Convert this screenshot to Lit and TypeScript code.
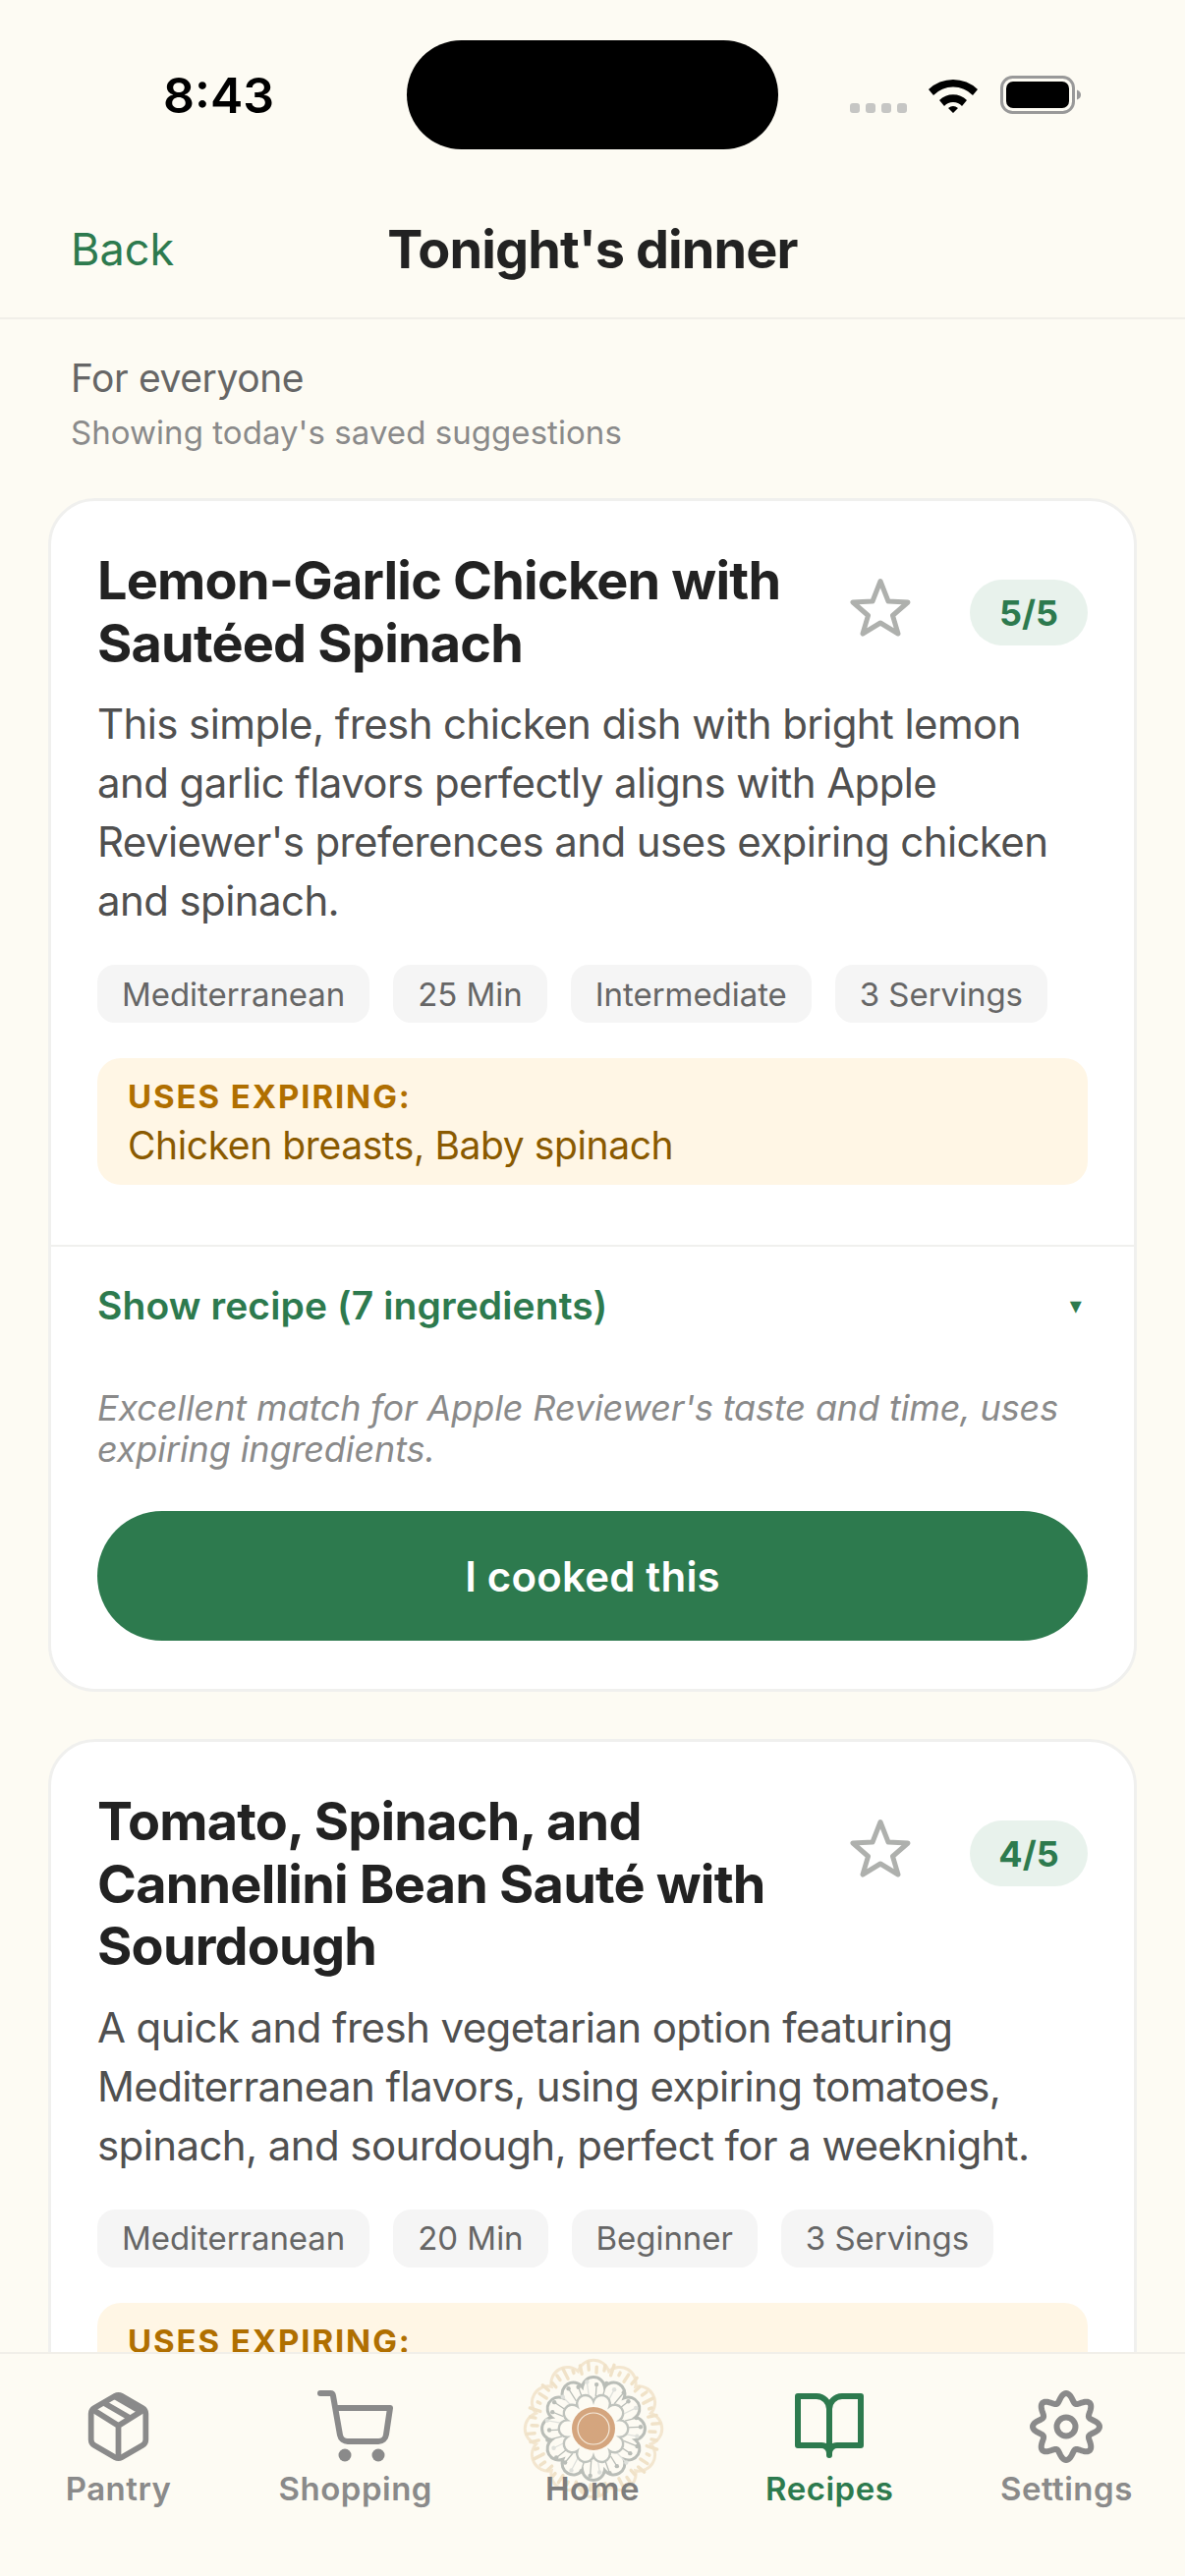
import { LitElement, html, css, svg } from "lit";
import { customElement } from "lit/decorators.js";

const polar = (r: number, deg: number, c = 105) => {
  const a = ((deg - 90) * Math.PI) / 180;
  return [c + r * Math.cos(a), c + r * Math.sin(a)].map((v) => v.toFixed(2));
};
const scallop = (n: number, valley: number, arc: number, offset = 0) => {
  let d = "";
  for (let i = 0; i < n; i++) {
    const p0 = polar(valley, offset + (i * 360) / n);
    const p1 = polar(valley, offset + ((i + 1) * 360) / n);
    d += `${i === 0 ? `M${p0[0]} ${p0[1]}` : ""}A${arc} ${arc} 0 0 1 ${p1[0]} ${p1[1]}`;
  }
  return d + "Z";
};
const range = (n: number) => Array.from({ length: n }, (_, i) => i);

const mandala = html`<svg class="mandala" viewBox="0 0 210 210" width="210" height="210" aria-hidden="true">
  <path d=${scallop(12, 60.5, 16.5, 15)} fill="none" stroke="#f3e6cf" stroke-width="3"></path>
  ${range(48).map((i) => {
    const deg = i * 7.5 + 3;
    const [x1, y1] = polar(57 + (i % 2) * 3, deg);
    const [x2, y2] = polar(63 + (i % 3) * 2.5, deg);
    return svg`<line x1=${x1} y1=${y1} x2=${x2} y2=${y2} stroke="#f0e2c8" stroke-width="3.4" stroke-linecap="round"></line>`;
  })}
  <path d=${scallop(12, 44, 11.5, 15)} fill="#fdfbf3" stroke="#b9bdb7" stroke-width="3"></path>
  ${range(30).map((i) => {
    const deg = i * 12 + 4;
    const [x1, y1] = polar(33, deg);
    const [x2, y2] = polar(44 + (i % 2) * 3, deg);
    const [cx, cy] = polar(45 + (i % 2) * 3, deg);
    const tone = i % 3 === 2 ? "#dfe1dc" : "#b9bdb7";
    return svg`<line x1=${x1} y1=${y1} x2=${x2} y2=${y2} stroke=${tone} stroke-width="1.3"></line><circle cx=${cx} cy=${cy} r="2.2" fill=${tone}></circle>`;
  })}
  <path d=${scallop(10, 28, 8.5)} fill="#fdfbf3" stroke="#bfc3bd" stroke-width="2.4"></path>
  <circle cx="105" cy="105" r="22" fill="#d4a57e"></circle>
  <circle cx="105" cy="105" r="16" fill="none" stroke="#f6ebdc" stroke-width="1.2"></circle>
</svg>`;

const gearPoints = range(240)
  .map((i) => {
    const deg = i * 1.5;
    const r = 29.5 + 4.5 * Math.cos((8 * deg * Math.PI) / 180);
    return polar(r, deg, 40).join(",");
  })
  .join(" ");

const icons = {
  pantry: html`<svg viewBox="0 0 74 74" width="71" height="72" fill="none" stroke="currentColor" stroke-width="6" stroke-linecap="round" stroke-linejoin="round"><path d="M33.500 4.500a7 7 0 0 1 7 0l22 12.600a7 7 0 0 1 3.500 6v27.800a7 7 0 0 1-3.500 6l-22 12.600a7 7 0 0 1-7 0l-22-12.600a7 7 0 0 1-3.500-6V23.100a7 7 0 0 1 3.500-6Z"></path><path d="M10 19l27 17 27-17M37 36v34M21 11.500l27 15.500M33 5l27 15.500" stroke-linecap="butt"></path></svg>`,
  shopping: html`<svg viewBox="0 0 78 74" width="78" height="74" fill="none" stroke="currentColor" stroke-width="6" stroke-linecap="round" stroke-linejoin="round"><path d="M3 3h10a3 3 0 0 1 3 2.500l7 40a8 8 0 0 0 8 6.500h31a8 8 0 0 0 8-7l4-27H19"></path><circle cx="28" cy="66" r="6.500" fill="currentColor" stroke="none"></circle><circle cx="62" cy="66" r="6.500" fill="currentColor" stroke="none"></circle></svg>`,
  book: html`<svg viewBox="0 0 74 74" width="74" height="74" fill="none" stroke="currentColor" stroke-width="6" stroke-linecap="round" stroke-linejoin="round"><path d="M37 66V19a13 13 0 0 0-13-13H5v50h24a8 8 0 0 1 8 8 8 8 0 0 1 8-8h24V6H50a13 13 0 0 0-13 13"></path></svg>`,
  gear: html`<svg viewBox="0 0 80 80" width="80" height="80" fill="none" stroke="currentColor" stroke-width="6" stroke-linejoin="round"><polygon points=${gearPoints}></polygon><circle cx="40" cy="40" r="9.500"></circle></svg>`,
};

const star = html`<svg class="star" viewBox="0 0 62 60" width="62" height="60" fill="none" stroke="#aeb0ad" stroke-width="5" stroke-linejoin="round" stroke-linecap="round"><path d="M31 3.500l8 20.500 20 1-15.500 13.500L49 57 31 46 13 57l5.500-18.500L3 25l20-1Z"></path></svg>`;

interface Recipe {
  title: string[];
  rating: string;
  desc: string;
  tags: string[];
  expiring?: string;
  ingredients?: number;
  note?: string;
}

const recipes: Recipe[] = [
  {
    title: ["Lemon-Garlic Chicken with", "Sautéed Spinach"],
    rating: "5/5",
    desc: "This simple, fresh chicken dish with bright lemon and garlic flavors perfectly aligns with Apple Reviewer's preferences and uses expiring chicken and spinach.",
    tags: ["Mediterranean", "25 Min", "Intermediate", "3 Servings"],
    expiring: "Chicken breasts, Baby spinach",
    ingredients: 7,
    note: "Excellent match for Apple Reviewer's taste and time, uses expiring ingredients.",
  },
  {
    title: ["Tomato, Spinach, and", "Cannellini Bean Sauté with", "Sourdough"],
    rating: "4/5",
    desc: "A quick and fresh vegetarian option featuring Mediterranean flavors, using expiring tomatoes, spinach, and sourdough, perfect for a weeknight.",
    tags: ["Mediterranean", "20 Min", "Beginner", "3 Servings"],
  },
];

@customElement("app-root")
export class AppRoot extends LitElement {
  static styles = css`
    :host {
      display: flex;
      flex-direction: column;
      width: 1206px;
      height: 2622px;
      overflow: hidden;
      background: #fdfbf3;
      font-family: Inter, "Liberation Sans", sans-serif;
      color: #222;
    }
    .status {
      flex: none;
      height: 192px;
      display: grid;
      grid-template-columns: 1fr 378px 1fr;
      box-sizing: border-box;
      padding-top: 41px;
    }
    .time {
      font-size: 50px;
      font-weight: 600;
      color: #000;
      padding-left: 166px;
      line-height: 112px;
    }
    .pill {
      height: 111px;
      background: #000;
      border-radius: 56px;
    }
    .sys {
      display: flex;
      justify-content: flex-end;
      padding-right: 106px;
      height: 78px;
      margin-top: 36px;
      align-items: flex-start;
    }
    .header {
      flex: none;
      height: 133px;
      display: grid;
      grid-template-columns: 1fr auto 1fr;
      align-items: center;
      padding: 0 72px 8px;
      box-sizing: border-box;
      border-bottom: 2px solid #f1efe9;
    }
    .back {
      font-size: 45px;
      color: #2d7a4e;
    }
    .page-title {
      font-size: 54px;
      font-weight: 700;
      letter-spacing: -0.9px;
      color: #222;
    }
    .main {
      flex: 1;
      min-height: 0;
      overflow: hidden;
    }
    .intro {
      padding: 36px 72px 0;
    }
    .who {
      font-size: 39px;
      line-height: 48px;
      letter-spacing: -0.4px;
      color: #666;
    }
    .saved {
      font-size: 33px;
      line-height: 40px;
      margin-top: 11px;
      color: #8a8a8a;
      letter-spacing: 0.05px;
    }
    .cards {
      display: flex;
      flex-direction: column;
      gap: 48px;
      padding: 47px 49px 0 49px;
    }
    .card {
      background: #fff;
      border: 3px solid #f0f0ee;
      border-radius: 48px;
    }
    .body {
      padding: 49px 47px 61px 47px;
    }
    .top {
      display: flex;
      align-items: flex-start;
    }
    .title {
      flex: 1;
      margin: 0;
      font-size: 54px;
      line-height: 63.6px;
      font-weight: 700;
      letter-spacing: -0.8px;
      color: #222;
    }
    .title span {
      display: block;
      white-space: nowrap;
    }
    .star {
      flex: none;
      margin: 29px 60px 0 0;
    }
    .badge {
      flex: none;
      width: 120px;
      height: 67px;
      margin-top: 31px;
      border-radius: 34px;
      background: #e8f2ec;
      color: #2d7a4e;
      font-size: 36px;
      font-weight: 700;
      display: flex;
      align-items: center;
      justify-content: center;
    }
    .desc {
      margin: 21px 0 0;
      font-size: 42px;
      line-height: 60px;
      letter-spacing: -0.6px;
      color: #505050;
    }
    .tags {
      display: flex;
      gap: 24px;
      margin-top: 35px;
    }
    .tag {
      height: 59px;
      display: flex;
      align-items: center;
      padding: 0 25px;
      font-size: 33px;
      letter-spacing: -0.05px;
      white-space: nowrap;
      border-radius: 18px;
      background: #f5f5f5;
      color: #666;
    }
    .expiring {
      margin-top: 36px;
      height: 129px;
      box-sizing: border-box;
      padding: 19px 31px 0 31px;
      background: #fff6e5;
      border-radius: 24px;
    }
    .exp-label {
      font-size: 33px;
      line-height: 40px;
      font-weight: 700;
      letter-spacing: 1.9px;
      color: #b06f00;
    }
    .exp-value {
      font-size: 39px;
      line-height: 50px;
      margin-top: 5px;
      letter-spacing: -0.4px;
      color: #8a5a00;
    }
    .toggle {
      height: 121px;
      box-sizing: border-box;
      border-top: 2px solid #f0f0ee;
      padding: 0 53px 0 47px;
      display: flex;
      align-items: center;
      justify-content: space-between;
      font-size: 39px;
      font-weight: 600;
      letter-spacing: 0.1px;
      color: #2d7a4e;
    }
    .caret {
      font-family: "DejaVu Sans", sans-serif;
      font-size: 24px;
      font-weight: 400;
    }
    .foot {
      padding: 24px 47px 49px 47px;
    }
    .note {
      margin: 0;
      font-size: 36px;
      line-height: 42px;
      font-style: italic;
      letter-spacing: -0.12px;
      color: #8a8a8a;
    }
    .cook {
      margin-top: 42px;
      height: 132px;
      border-radius: 66px;
      background: #2d7a4e;
      color: #fff;
      font-size: 42px;
      font-weight: 600;
      letter-spacing: 0.2px;
      display: flex;
      align-items: center;
      justify-content: center;
    }
    .tabs {
      flex: none;
      height: 228px;
      box-sizing: border-box;
      border-top: 2px solid #f1efe9;
      background: #fdfbf3;
      display: grid;
      grid-template-columns: repeat(5, 1fr);
      position: relative;
      z-index: 1;
    }
    .tab {
      position: relative;
      display: flex;
      flex-direction: column;
      align-items: center;
      padding-top: 34px;
      color: #8a8a8a;
    }
    .tab.active {
      color: #2d7a4e;
    }
    .tab.home {
      color: #7d7d7d;
    }
    .glyph {
      height: 80px;
      display: flex;
      align-items: center;
      justify-content: center;
    }
    .label {
      position: relative;
      margin-top: 1px;
      font-size: 33px;
      line-height: 44px;
      font-weight: 600;
      letter-spacing: 0.5px;
    }
    .mandala {
      position: absolute;
      left: 50%;
      top: -29px;
      margin-left: -104px;
    }
  `;

  private renderCard(r: Recipe) {
    return html`<article class="card">
      <div class="body">
        <div class="top">
          <h2 class="title">${r.title.map((t) => html`<span>${t}</span>`)}</h2>
          ${star}
          <div class="badge">${r.rating}</div>
        </div>
        <p class="desc">${r.desc}</p>
        <div class="tags">${r.tags.map((t) => html`<div class="tag">${t}</div>`)}</div>
        <div class="expiring">
          <div class="exp-label">USES EXPIRING:</div>
          ${r.expiring ? html`<div class="exp-value">${r.expiring}</div>` : ""}
        </div>
      </div>
      ${r.ingredients
        ? html`<div class="toggle">
              <span>Show recipe (${r.ingredients} ingredients)</span><span class="caret">▾</span>
            </div>
            <div class="foot">
              <p class="note">${r.note}</p>
              <div class="cook">I cooked this</div>
            </div>`
        : ""}
    </article>`;
  }

  render() {
    return html`
      <div class="status">
        <div class="time">8:43</div>
        <div class="pill"></div>
        <div class="sys">
          <svg viewBox="0 0 236 40" width="236" height="40" aria-hidden="true">
            <g fill="#c6c6c4">
              <rect x="1" y="28" width="10" height="10" rx="3"></rect>
              <rect x="17" y="28" width="10" height="10" rx="3"></rect>
              <rect x="33" y="28" width="10" height="10" rx="3"></rect>
              <rect x="49" y="28" width="10" height="10" rx="3"></rect>
            </g>
            <path d="M81 15a36 36 0 0 1 50 0l-5 6a28 28 0 0 0-40 0ZM92 26a20 20 0 0 1 28 0l-5 6a12 12 0 0 0-18 0ZM101 34a8 8 0 0 1 10 0l-5 5Z" fill="#000" transform="translate(0 -1)"></path>
            <rect x="155.500" y="1.500" width="73" height="36" rx="11" fill="none" stroke="#999" stroke-width="3"></rect>
            <rect x="160" y="6" width="64" height="27" rx="7" fill="#000"></rect>
            <path d="M232 14.500c3 1 4 3 4 5s-1 4-4 5Z" fill="#999"></path>
          </svg>
        </div>
      </div>
      <div class="header">
        <div class="back">Back</div>
        <div class="page-title">Tonight's dinner</div>
        <div></div>
      </div>
      <div class="main">
        <div class="intro">
          <div class="who">For everyone</div>
          <div class="saved">Showing today's saved suggestions</div>
        </div>
        <div class="cards">${recipes.map((r) => this.renderCard(r))}</div>
      </div>
      <nav class="tabs">
        <div class="tab"><div class="glyph">${icons.pantry}</div><div class="label">Pantry</div></div>
        <div class="tab"><div class="glyph">${icons.shopping}</div><div class="label">Shopping</div></div>
        <div class="tab home">${mandala}<div class="glyph"></div><div class="label">Home</div></div>
        <div class="tab active"><div class="glyph">${icons.book}</div><div class="label">Recipes</div></div>
        <div class="tab"><div class="glyph">${icons.gear}</div><div class="label">Settings</div></div>
      </nav>
    `;
  }
}
